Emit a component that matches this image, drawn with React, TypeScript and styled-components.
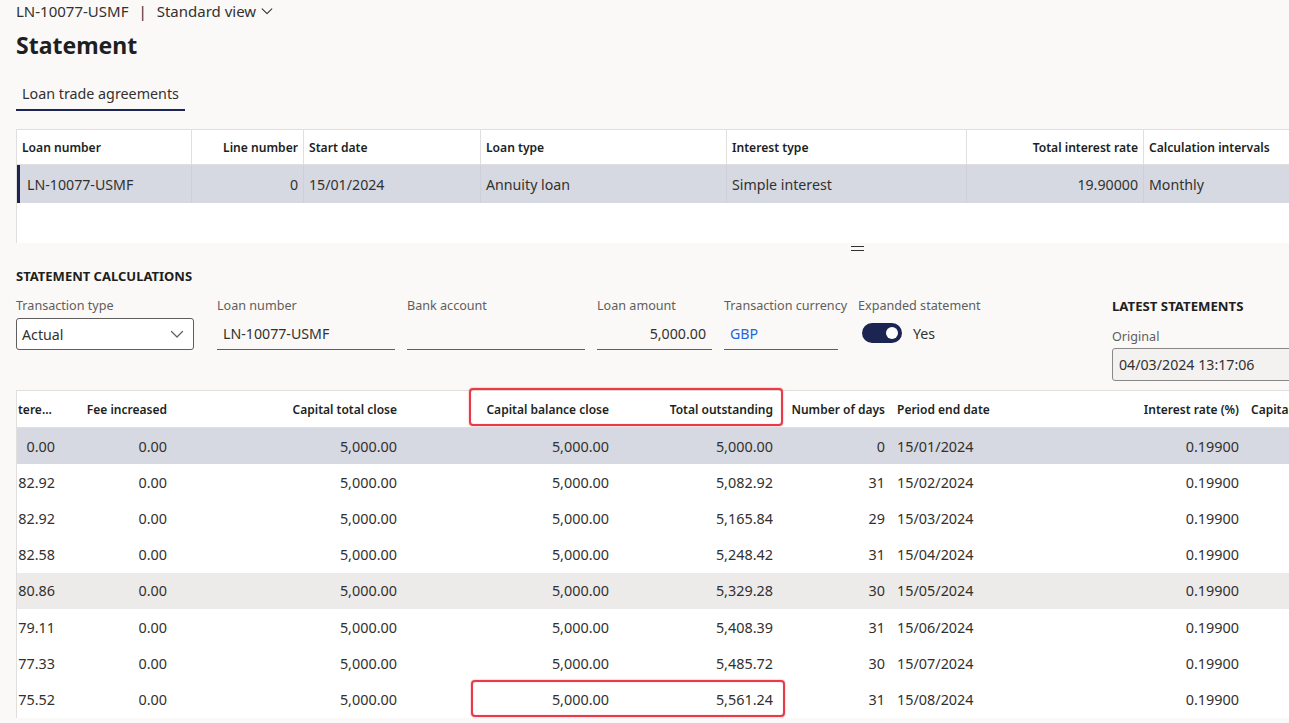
import React from "react";
import styled, { createGlobalStyle, css } from "styled-components";

const GlobalStyle = createGlobalStyle`
  html, body {
    margin: 0;
    padding: 0;
    background: #faf9f8;
  }
  body {
    font-family: "Segoe UI", "Noto Sans", "Open Sans", sans-serif;
    color: #323130;
  }
`;

const Page = styled.div`
  position: relative;
  width: 1289px;
  height: 723px;
  overflow: hidden;
  padding-left: 16px;
  box-sizing: border-box;
`;

const Breadcrumb = styled.div`
  display: flex;
  align-items: center;
  height: 22px;
  font-size: 15px;
  color: #323130;

  & .sep {
    margin: 0 10px 0 10px;
  }

  & svg {
    margin-left: 4px;
  }
`;

const Title = styled.h1`
  margin: 7px 0 0 0;
  font-size: 23px;
  font-weight: 700;
  line-height: 32px;
  color: #201f1e;
`;

const TabBar = styled.div`
  display: flex;
  margin-top: 22px;
`;

const Tab = styled.div<{ $active?: boolean }>`
  padding: 0 6px;
  height: 26px;
  line-height: 22px;
  font-size: 14.3px;
  color: #323130;
  border-bottom: ${(p) => (p.$active ? "2px solid #1c2452" : "2px solid transparent")};
`;

const TopGrid = styled.div`
  margin-top: 18px;
  width: 1400px;
  height: 113px;
  background: #fff;
  border-top: 1px solid #e1dfdd;
  border-left: 1px solid #e1dfdd;
`;

const topCols = "175px 112px 177px 246px 240px 177px 200px";

const GridRow = styled.div<{ $cols: string; $height: number; $bg?: string }>`
  display: grid;
  grid-template-columns: ${(p) => p.$cols};
  height: ${(p) => p.$height}px;
  background: ${(p) => p.$bg || "transparent"};
  box-sizing: border-box;
`;

const TopHeadCell = styled.div<{ $right?: boolean }>`
  display: flex;
  align-items: center;
  justify-content: ${(p) => (p.$right ? "flex-end" : "flex-start")};
  padding: 0 5px;
  font-size: 12.1px;
  font-weight: 600;
  color: #201f1e;
  border-right: 1px solid #e1dfdd;
  border-bottom: 1px solid #e1dfdd;
  white-space: nowrap;
`;

const TopCell = styled.div<{ $right?: boolean; $first?: boolean }>`
  display: flex;
  align-items: center;
  justify-content: ${(p) => (p.$right ? "flex-end" : "flex-start")};
  padding: 0 5px;
  font-size: 14.2px;
  color: #323130;
  border-right: 1px solid #cdd0d8;
  white-space: nowrap;
  ${(p) =>
    p.$first &&
    css`
      padding-left: 7px;
      border-left: 3px solid #1c2452;
    `}
`;

const Splitter = styled.div`
  display: flex;
  justify-content: center;
  width: 1682px;
  height: 10px;
  align-items: center;

  & span {
    display: block;
    width: 13px;
    height: 3px;
    border-top: 1.5px solid #323130;
    border-bottom: 1.5px solid #323130;
  }
`;

const SectionTitle = styled.div`
  margin-top: 15px;
  font-size: 13px;
  font-weight: 700;
  color: #201f1e;
  text-transform: uppercase;
  line-height: 16px;
`;

const FieldsRow = styled.div`
  display: flex;
  align-items: flex-start;
  margin-top: 14px;
`;

const Field = styled.div<{ $width: number; $gap?: number }>`
  display: flex;
  flex-direction: column;
  flex-shrink: 0;
  width: ${(p) => p.$width}px;
  margin-right: ${(p) => p.$gap ?? 12}px;
`;

const Label = styled.div`
  font-size: 12.6px;
  line-height: 16px;
  color: #605e5c;
  white-space: nowrap;
`;

const ComboBox = styled.div`
  margin-top: 4px;
  height: 32px;
  box-sizing: border-box;
  border: 1px solid #605e5c;
  border-radius: 3px;
  background: #fff;
  display: flex;
  align-items: center;
  justify-content: space-between;
  padding: 0 8px 0 5px;
  font-size: 14.2px;
`;

const LineInput = styled.div<{ $right?: boolean; $link?: boolean }>`
  margin-top: 4px;
  height: 32px;
  box-sizing: border-box;
  border-bottom: 1px solid #605e5c;
  display: flex;
  align-items: center;
  justify-content: ${(p) => (p.$right ? "flex-end" : "flex-start")};
  padding: 0 6px;
  font-size: 14.2px;
  color: ${(p) => (p.$link ? "#2266e3" : "#323130")};
`;

const ToggleRow = styled.div`
  display: flex;
  align-items: center;
  margin-top: 9px;
  margin-left: 4px;
  gap: 11px;
  font-size: 14.2px;
`;

const Toggle = styled.div<{ $on?: boolean }>`
  position: relative;
  width: 40px;
  height: 20px;
  border-radius: 10px;
  background: ${(p) => (p.$on ? "#1c2452" : "#fff")};

  &::after {
    content: "";
    position: absolute;
    top: 4px;
    left: ${(p) => (p.$on ? "24px" : "4px")};
    width: 12px;
    height: 12px;
    border-radius: 50%;
    background: #fff;
  }
`;

const LatestBlock = styled.div`
  display: flex;
  flex-direction: column;
  flex-shrink: 0;
  margin-left: 112px;
`;

const LatestTitle = styled.div`
  font-size: 13.2px;
  font-weight: 700;
  color: #201f1e;
  line-height: 16px;
`;

const OriginalLabel = styled(Label)`
  margin-top: 15px;
`;

const ReadOnlyBox = styled.div`
  margin-top: 3px;
  width: 220px;
  height: 33px;
  box-sizing: border-box;
  border: 1px solid #8a8886;
  border-radius: 3px;
  background: #f3f2f1;
  display: flex;
  align-items: center;
  padding: 0 6px;
  font-size: 14.2px;
`;

const BottomWrap = styled.div`
  position: relative;
  margin-top: 9px;
`;

const BottomGrid = styled.div`
  width: 1400px;
  background: #fff;
  border-top: 1px solid #e1dfdd;
  border-left: 1px solid #e1dfdd;
`;

const bottomCols = "44px 112px 230px 212px 164px 112px 111px 243px 160px";

const BottomHeadCell = styled.div<{ $right?: boolean; $first?: boolean }>`
  display: flex;
  align-items: center;
  justify-content: ${(p) => (p.$right ? "flex-end" : "flex-start")};
  padding: 0 6px;
  padding-left: ${(p) => (p.$first ? "1px" : "6px")};
  font-size: 12px;
  font-weight: 600;
  color: #201f1e;
  border-bottom: 1px solid #e1dfdd;
  white-space: nowrap;
  overflow: hidden;
`;

const BottomCell = styled.div<{ $right?: boolean; $first?: boolean }>`
  display: flex;
  align-items: center;
  justify-content: ${(p) => (p.$right ? "flex-end" : "flex-start")};
  padding: 0 6px;
  padding-left: ${(p) => (p.$first ? "1px" : "6px")};
  font-size: 14.4px;
  color: #323130;
  white-space: nowrap;
  overflow: hidden;
`;

const Marker = styled.div<{ $x: number; $y: number; $w: number; $h: number }>`
  position: absolute;
  left: ${(p) => p.$x}px;
  top: ${(p) => p.$y}px;
  width: ${(p) => p.$w}px;
  height: ${(p) => p.$h}px;
  box-sizing: border-box;
  border: 2px solid #e83a47;
  border-radius: 4px;
  box-shadow: 0 0 1.5px rgba(232, 58, 71, 0.8), inset 0 0 1px rgba(232, 58, 71, 0.6);
  pointer-events: none;
`;

const Chevron = ({ size = 13, color = "#323130" }: { size?: number; color?: string }) => (
  <svg width={size} height={size} viewBox="0 0 16 16" fill="none">
    <path d="M2.5 5.5 L8 11 L13.5 5.5" stroke={color} strokeWidth={1.2} strokeLinecap="round" strokeLinejoin="round" />
  </svg>
);

const topHeaders = [
  { label: "Loan number" },
  { label: "Line number", right: true },
  { label: "Start date" },
  { label: "Loan type" },
  { label: "Interest type" },
  { label: "Total interest rate", right: true },
  { label: "Calculation intervals" },
];

const topRow = ["LN-10077-USMF", "0", "15/01/2024", "Annuity loan", "Simple interest", "19.90000", "Monthly"];

const bottomHeaders = [
  { label: "tere..." },
  { label: "Fee increased", right: true },
  { label: "Capital total close", right: true },
  { label: "Capital balance close", right: true },
  { label: "Total outstanding", right: true },
  { label: "Number of days", right: true },
  { label: "Period end date" },
  { label: "Interest rate (%)", right: true },
  { label: "Capital" },
];

const rows = [
  ["0.00", "5,000.00", "0", "15/01/2024"],
  ["82.92", "5,082.92", "31", "15/02/2024"],
  ["82.92", "5,165.84", "29", "15/03/2024"],
  ["82.58", "5,248.42", "31", "15/04/2024"],
  ["80.86", "5,329.28", "30", "15/05/2024"],
  ["79.11", "5,408.39", "31", "15/06/2024"],
  ["77.33", "5,485.72", "30", "15/07/2024"],
  ["75.52", "5,561.24", "31", "15/08/2024"],
];

const rowBg = (i: number) => (i === 0 ? "#d6d9e1" : i === 4 ? "#edebe9" : "#fff");

const App = () => {
  return (
    <>
      <GlobalStyle />
      <Page>
        <Breadcrumb>
          <span>LN-10077-USMF</span>
          <span className="sep">|</span>
          <span>Standard view</span>
          <Chevron size={14} />
        </Breadcrumb>
        <Title>Statement</Title>
        <TabBar>
          <Tab $active>Loan trade agreements</Tab>
        </TabBar>

        <TopGrid>
          <GridRow $cols={topCols} $height={35}>
            {topHeaders.map((h) => (
              <TopHeadCell key={h.label} $right={h.right}>
                {h.label}
              </TopHeadCell>
            ))}
          </GridRow>
          <GridRow $cols={topCols} $height={38} $bg="#d6d9e1">
            {topRow.map((v, i) => (
              <TopCell key={i} $right={topHeaders[i].right} $first={i === 0}>
                {v}
              </TopCell>
            ))}
          </GridRow>
        </TopGrid>

        <Splitter>
          <span />
        </Splitter>

        <SectionTitle>Statement calculations</SectionTitle>

        <FieldsRow>
          <Field $width={178} $gap={23}>
            <Label>Transaction type</Label>
            <ComboBox>
              <span>Actual</span>
              <Chevron size={16} color="#605e5c" />
            </ComboBox>
          </Field>
          <Field $width={178}>
            <Label>Loan number</Label>
            <LineInput>LN-10077-USMF</LineInput>
          </Field>
          <Field $width={178}>
            <Label>Bank account</Label>
            <LineInput />
          </Field>
          <Field $width={115}>
            <Label>Loan amount</Label>
            <LineInput $right>5,000.00</LineInput>
          </Field>
          <Field $width={114} $gap={20}>
            <Label>Transaction currency</Label>
            <LineInput $link>GBP</LineInput>
          </Field>
          <Field $width={130}>
            <Label>Expanded statement</Label>
            <ToggleRow>
              <Toggle $on />
              <span>Yes</span>
            </ToggleRow>
          </Field>
          <LatestBlock>
            <LatestTitle>LATEST STATEMENTS</LatestTitle>
            <OriginalLabel>Original</OriginalLabel>
            <ReadOnlyBox>04/03/2024 13:17:06</ReadOnlyBox>
          </LatestBlock>
        </FieldsRow>

        <BottomWrap>
          <BottomGrid>
            <GridRow $cols={bottomCols} $height={37}>
              {bottomHeaders.map((h, i) => (
                <BottomHeadCell key={h.label} $right={h.right} $first={i === 0}>
                  {h.label}
                </BottomHeadCell>
              ))}
            </GridRow>
            {rows.map((r, i) => (
              <GridRow key={i} $cols={bottomCols} $height={36.2} $bg={rowBg(i)}>
                <BottomCell $right>{r[0]}</BottomCell>
                <BottomCell $right>0.00</BottomCell>
                <BottomCell $right>5,000.00</BottomCell>
                <BottomCell $right>5,000.00</BottomCell>
                <BottomCell $right>{r[1]}</BottomCell>
                <BottomCell $right>{r[2]}</BottomCell>
                <BottomCell>{r[3]}</BottomCell>
                <BottomCell $right>0.19900</BottomCell>
                <BottomCell />
              </GridRow>
            ))}
          </BottomGrid>
          <Marker $x={453} $y={-2} $w={314} $h={38} />
          <Marker $x={455} $y={290} $w={314} $h={37} />
        </BottomWrap>
      </Page>
    </>
  );
};

export default App;
